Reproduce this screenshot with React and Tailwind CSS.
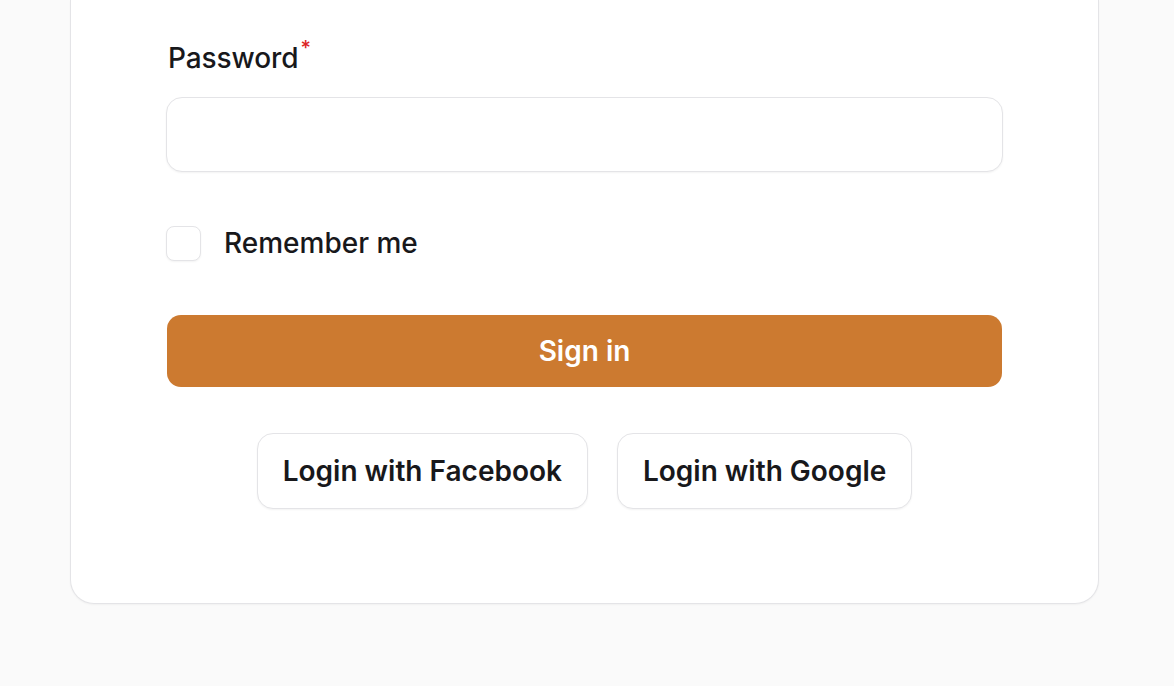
// Sign-in card, lower half: password field, remember-me, submit and social logins.
import { useState } from 'react'

const SOCIAL = ['Login with Facebook', 'Login with Google']

export default function App() {
  const [remember, setRemember] = useState(false)

  return (
    <div
      className="h-[686px] overflow-hidden bg-[#fafafa] text-[#18181b]"
      style={{ fontFamily: 'Inter, "Liberation Sans", sans-serif' }}
    >
      <div className="ml-[70px] w-[1029px] rounded-b-[24px] border-x border-b border-[#e4e4e7] bg-white px-[95px] pt-[38px] pb-[94px] shadow-[0_1px_2px_rgba(0,0,0,0.04)]">
        {/* Password field */}
        <label className="block">
          <div className="flex h-[40px] items-center pl-[2px] text-[28px] font-medium leading-[40px] tracking-[-0.1px]">
            Password
            <sup className="ml-[2px] text-[20px] font-medium text-[#dc2626]">*</sup>
          </div>
          <input
            type="password"
            className="mt-[19px] block h-[75px] w-[837px] rounded-[16px] border border-[#e4e4e7] bg-white px-[24px] text-[28px] shadow-[0_1px_2px_rgba(0,0,0,0.05)] focus:outline-none"
            aria-label="Password"
          />
        </label>

        {/* Remember me */}
        <label className="mt-[51px] flex h-[40px] items-center gap-[23px]">
          <button
            type="button"
            onClick={() => setRemember(v => !v)}
            className="h-[35px] w-[35px] shrink-0 rounded-[8px] border border-[#e4e4e7] bg-white shadow-[0_1px_2px_rgba(0,0,0,0.05)]"
            aria-pressed={remember}
          />
          <span className="text-[28px] font-medium leading-[40px]">Remember me</span>
        </label>

        {/* Submit */}
        <button
          type="button"
          className="mt-[52px] ml-[1px] flex h-[72px] w-[835px] items-center justify-center rounded-[14px] bg-[#cc7a30] text-[28px] font-semibold text-white"
        >
          Sign in
        </button>

        {/* Social logins */}
        <div className="mt-[46px] flex justify-center gap-[29px]">
          {SOCIAL.map(label => (
            <button
              key={label}
              type="button"
              className="flex h-[76px] items-center rounded-[16px] border border-[#e4e4e7] bg-white px-[25px] text-[28px] font-semibold shadow-[0_1px_2px_rgba(0,0,0,0.05)]"
            >
              {label}
            </button>
          ))}
        </div>
      </div>
    </div>
  )
}
